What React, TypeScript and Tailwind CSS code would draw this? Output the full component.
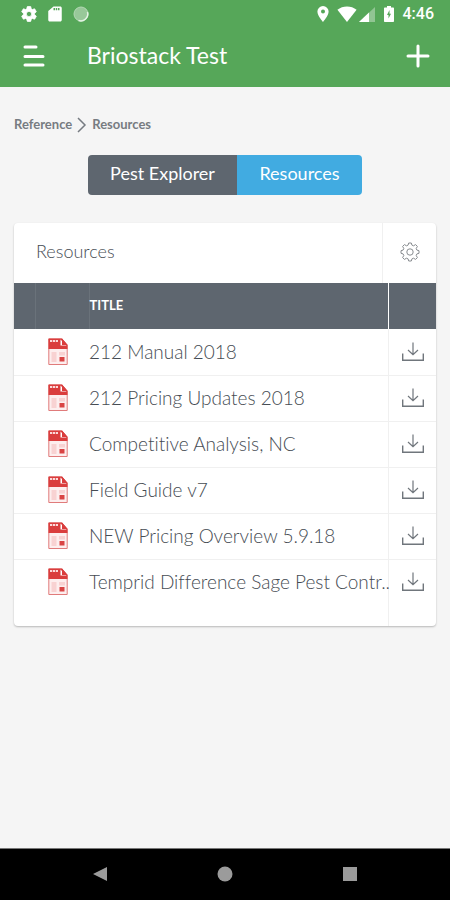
const resources = [
  '212 Manual 2018',
  '212 Pricing Updates 2018',
  'Competitive Analysis, NC',
  'Field Guide v7',
  'NEW Pricing Overview 5.9.18',
  'Temprid Difference Sage Pest Contr..',
];

function StatusBar() {
  return (
    <div className="flex h-7 items-center justify-between pl-5 pr-4 text-white">
      <div className="flex items-center gap-2">
        <svg className="size-[18px]" viewBox="0 0 24 24" fill="currentColor" aria-hidden="true">
          <path stroke="currentColor" d="M19.43 12.98c.04-.32.07-.64.07-.98s-.03-.66-.07-.98l2.11-1.65c.19-.15.24-.42.12-.64l-2-3.46c-.12-.22-.39-.3-.61-.22l-2.49 1c-.52-.4-1.08-.73-1.69-.98l-.38-2.65A.49.49 0 0 0 14 2h-4c-.25 0-.46.18-.49.42l-.38 2.65c-.61.25-1.17.59-1.69.98l-2.49-1c-.23-.09-.49 0-.61.22l-2 3.46c-.13.22-.07.49.12.64l2.11 1.65c-.04.32-.07.65-.07.98s.03.66.07.98l-2.11 1.65c-.19.15-.24.42-.12.64l2 3.46c.12.22.39.3.61.22l2.49-1c.52.4 1.08.73 1.69.98l.38 2.65c.03.24.24.42.49.42h4c.25 0 .46-.18.49-.42l.38-2.65c.61-.25 1.17-.59 1.69-.98l2.49 1c.23.09.49 0 .61-.22l2-3.46c.12-.22.07-.49-.12-.64l-2.11-1.65zM12 15.5a3.5 3.5 0 1 1 0-7 3.5 3.5 0 0 1 0 7z" />
        </svg>
        <svg className="size-[18px]" viewBox="0 0 24 24" fill="currentColor" aria-hidden="true">
          <path d="M19 2h-9L3 8v12c0 1.100.9 2 2 2h14c1.100 0 2-.9 2-2V4c0-1.100-.9-2-2-2zm-7 5h-2V4h2v3zm3 0h-2V4h2v3zm3 0h-2V4h2v3z" />
        </svg>
        <svg className="size-[18px]" viewBox="0 0 18 18" aria-hidden="true">
          <circle cx="9" cy="9" r="7" fill="#98c899" stroke="#b4d8b4" />
          <path d="M15.500 7a7 7 0 0 1-9 8.500" fill="none" stroke="#e4f2e4" strokeWidth="1.500" />
        </svg>
      </div>
      <div className="flex items-center">
        <svg className="h-4 w-3" viewBox="0 0 12 16" fill="currentColor" aria-hidden="true">
          <path fillRule="evenodd" d="M6 0a5.600 5.600 0 0 0-5.600 5.600C.4 9.800 6 16 6 16s5.600-6.200 5.600-10.400A5.600 5.600 0 0 0 6 0zm0 7.600a2 2 0 1 1 0-4 2 2 0 0 1 0 4z" />
        </svg>
        <svg className="ml-2 h-4 w-5" viewBox="0 0 20 16" fill="currentColor" aria-hidden="true">
          <path d="M10 16 .4 3.700C3 1.600 6.500.4 10 .4s7 1.200 9.600 3.300z" />
        </svg>
        <svg className="ml-0.5 size-4" viewBox="0 0 16 16" fill="currentColor" aria-hidden="true">
          <path d="M0 16 16 1v15z" opacity=".35" />
          <path d="M0 16 10 6.600V16z" />
        </svg>
        <svg className="ml-2 h-4 w-3" viewBox="0 0 12 16" fill="currentColor" aria-hidden="true">
          <path fillRule="evenodd" d="M4 0h4v1.500h2c.6 0 1 .4 1 1V15c0 .6-.4 1-1 1H2c-.6 0-1-.4-1-1V2.500c0-.6.4-1 1-1h2zm2.500 4L4 9h1.500v3.500L8 7.700H6.500z" />
        </svg>
        <span className="ml-2 font-[Roboto,sans-serif] text-base font-medium">4:46</span>
      </div>
    </div>
  );
}

function PdfIcon() {
  return (
    <svg className="mx-auto h-7 w-5" viewBox="0 0 20 28" role="img" aria-label="PDF">
      <path d="M.8 1h13L19.200 7v19.500H.8z" fill="#fdeeee" stroke="#e07b7b" />
      <path d="M.5 .5H14L19.500 7v4H.5z" fill="#da3d3d" />
      <path d="M12.500 1.500 18.500 7.500H12.500z" fill="#fff" />
      <path d="M14 .5 19.500 7H14z" fill="#da3d3d" />
      <path d="M2 3h8" stroke="#fbdada" strokeWidth="2" strokeDasharray="2.200 .7" />
      <path d="M3.500 14h5v10h-5zM11 14h6v3.500h-6z" fill="#f8d2d2" />
      <path d="M11.500 19h5v4.500h-5z" fill="#d94444" />
    </svg>
  );
}

function DownloadIcon() {
  return (
    <svg className="h-5 w-6" viewBox="0 0 24 20" fill="none" stroke="#70767c" aria-hidden="true">
      <path d="M1.700 11.500v6.700h20.600v-6.700" strokeWidth="1.400" />
      <path d="M12 .5v12M7 8l5 4.700L17 8" strokeWidth="1.200" />
    </svg>
  );
}

function GearIcon() {
  return (
    <svg className="size-5" viewBox="0 0 20 20" fill="none" stroke="#888c90" strokeLinejoin="round" aria-hidden="true">
      <path d="M8.700 1h2.600l.6 2.100 1.600.7 2.100-1.200 1.800 1.800-1.200 2.100.7 1.600 2.100.6v2.600l-2.100.6-.7 1.600 1.200 2.100-1.800 1.800-2.100-1.200-1.600.7-.6 2.100H8.700l-.6-2.100-1.600-.7-2.100 1.200-1.800-1.800 1.200-2.100-.7-1.600L1 11.300V8.700l2.100-.6.7-1.600-1.200-2.100 1.800-1.800 2.100 1.200 1.600-.7z" />
      <circle cx="10" cy="10" r="3.200" />
    </svg>
  );
}

export default function App() {
  return (
    <div className="flex min-h-screen flex-col bg-[#f5f5f5] font-[Lato,sans-serif] text-[#5d646c] [font-variant-ligatures:none]">
      <header className="bg-[#56a759] text-white">
        <StatusBar />
        <div className="flex h-[59px] items-center px-5 pb-1">
          <button type="button" aria-label="Menu" className="w-[67px] pl-[3px]">
            <svg className="h-6 w-[22px]" viewBox="0 0 22 24" stroke="currentColor" strokeWidth="3" strokeLinecap="round" aria-hidden="true">
              <path d="M2 3h11M2 12.500h18M2 21h18" />
            </svg>
          </button>
          <h1 className="flex-1 text-[23px]">Briostack Test</h1>
          <button type="button" aria-label="Add">
            <svg className="size-6" viewBox="0 0 24 24" stroke="currentColor" strokeWidth="3" strokeLinecap="round" aria-hidden="true">
              <path d="M12 2v20M2 12h20" />
            </svg>
          </button>
        </div>
      </header>

      <main className="flex-1 px-[14px] pt-7">
        <nav aria-label="Breadcrumb" className="flex h-5 items-center text-[13px] font-bold text-[#777c82]">
          <a href="#reference">Reference</a>
          <svg className="mx-1 h-4 w-3" viewBox="0 0 12 16" fill="none" stroke="currentColor" strokeWidth="1.500" aria-hidden="true">
            <path d="M2 1l7 7-7 7" />
          </svg>
          <a href="#resources">Resources</a>
        </nav>

        <div className="mt-5 flex justify-center text-lg text-white">
          <button type="button" className="h-10 w-[149px] rounded-l bg-[#5e666f] pb-1">Pest Explorer</button>
          <button type="button" className="h-10 w-[125px] rounded-r bg-[#41abe1] pb-1">Resources</button>
        </div>

        <section className="mt-7 overflow-hidden rounded bg-white shadow-[0_1px_2px_#00000040]">
          <div className="flex h-[60px] items-stretch">
            <h2 className="flex-1 self-center pb-1 pl-[22px] text-lg font-light text-[#464c53]">Resources</h2>
            <button type="button" aria-label="Settings" className="flex w-[54px] items-center justify-center border-l border-[#f0f0f0] pb-0.5">
              <GearIcon />
            </button>
          </div>
          <table className="w-full table-fixed border-collapse">
            <thead>
              <tr className="h-[46px] bg-[#5e666f] text-left text-[13px] text-white">
                <th className="w-[21px] border-r border-[#6a727a]" />
                <th className="w-[54px] border-r border-[#6a727a]" />
                <th className="border-r border-white">TITLE</th>
                <th className="w-12" />
              </tr>
            </thead>
            <tbody>
              {resources.map((title) => (
                <tr key={title} className="h-[46px] border-b border-[#f0f0f0] last:border-b-0">
                  <td />
                  <td className="pr-2"><PdfIcon /></td>
                  <td className="border-r border-[#f0f0f0] text-[19px] font-light whitespace-nowrap text-[#464c53]">{title}</td>
                  <td className="pl-0.5">
                    <button type="button" aria-label={'Download ' + title} className="mx-auto block">
                      <DownloadIcon />
                    </button>
                  </td>
                </tr>
              ))}
            </tbody>
            <tfoot>
              <tr className="h-[21px]">
                <td />
                <td />
                <td className="border-r border-[#f0f0f0]" />
                <td />
              </tr>
            </tfoot>
          </table>
        </section>
      </main>

      <footer className="flex h-[52px] items-center justify-around border-t border-[#777] bg-black px-[37px] pb-0.5 text-[#9b9b9b]">
        <button type="button" aria-label="Back">
          <svg className="size-4" viewBox="0 0 16 16" fill="currentColor" aria-hidden="true"><path d="M15 1v14L1 8z" /></svg>
        </button>
        <button type="button" aria-label="Home">
          <svg className="size-4" viewBox="0 0 16 16" fill="currentColor" aria-hidden="true"><circle cx="8" cy="8" r="7.500" /></svg>
        </button>
        <button type="button" aria-label="Recent apps">
          <svg className="size-4" viewBox="0 0 16 16" fill="currentColor" aria-hidden="true"><path d="M1 1h14v14H1z" /></svg>
        </button>
      </footer>
    </div>
  );
}
